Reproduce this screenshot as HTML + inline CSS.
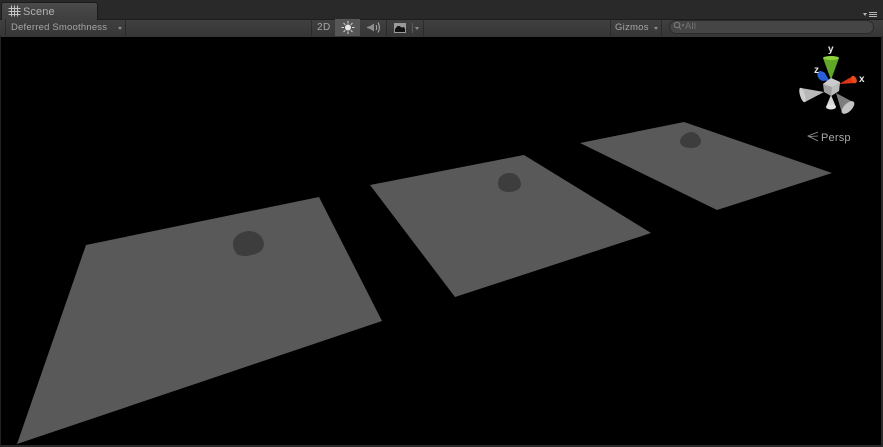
<!DOCTYPE html>
<html><head><meta charset="utf-8">
<style>
html,body{margin:0;padding:0;background:#000;}
#r{position:relative;width:883px;height:447px;overflow:hidden;background:#000;font-family:"Liberation Sans",sans-serif;}
.a{position:absolute}
#top{left:0;top:0;width:883px;height:19px;background:#292929;}
#tab{left:1px;top:2px;width:97px;height:18px;background:linear-gradient(#4a4a4a,#3e3e3e);border:1px solid #1c1c1c;border-bottom:none;border-radius:3px 3px 0 0;box-sizing:border-box;}
#bar{left:0;top:19px;width:883px;height:18px;background:linear-gradient(#404040,#363636);border-top:1px solid #1d1d1d;box-sizing:border-box;}
.t{color:#a6a6a6;font-size:9.5px;letter-spacing:.2px;line-height:12px;white-space:nowrap}
.s{width:1px;top:19px;height:17px;background:#2a2a2a}
.tri{width:0;height:0;border-left:2.5px solid transparent;border-right:2.5px solid transparent;border-top:3px solid #8c8c8c}
</style></head><body>
<div id="r">
<div class="a" id="top"></div>
<div class="a" id="bar"></div>
<div class="a" id="tab"></div>
<svg class="a" style="left:8px;top:5px" width="13" height="13" viewBox="0 0 13 13"><path d="M3.500 0.500V11.500M6.500 0.500V11.500M9.500 0.500V11.500M0.500 3.500H12.500M0.500 6.500H12.500M0.500 9.500H12.500" stroke="#c4c4c4" stroke-width="1" fill="none"/></svg>
<div class="a t" style="left:23px;top:6px;font-size:11px;letter-spacing:.1px;color:#b0b0b0;line-height:13px">Scene</div>
<div class="a s" style="left:5px"></div>
<div class="a t" style="left:11px;top:22px">Deferred Smoothness</div>
<div class="a tri" style="left:118px;top:27px"></div>
<div class="a s" style="left:125px"></div>
<div class="a s" style="left:311px"></div>
<div class="a t" style="left:317px;top:22px;font-size:10px;letter-spacing:.5px">2D</div>
<div class="a s" style="left:335px"></div>
<div class="a" style="left:335px;top:19px;width:25px;height:17px;background:#565656"></div>
<svg class="a" style="left:341px;top:20px" width="14" height="15" viewBox="0 0 14 15"><circle cx="7" cy="7.500" r="3" fill="#e8e8e8"/><path d="M7 1V3.500M7 11.500V14M.5 7.500H3M11 7.500H13.500M2.500 3L4.300 4.800M9.700 10.200L11.500 12M2.500 12L4.300 10.200M9.700 4.800L11.500 3" stroke="#d5d5d5" stroke-width="1"/></svg>
<div class="a s" style="left:386px"></div>
<svg class="a" style="left:366px;top:20px" width="16" height="15" viewBox="0 0 16 15"><path d="M1 7L4 6L8 3.500V11.500L4 9L1 8Z" fill="#8c8c8c"/><path d="M10 5Q11.500 7.500 10 10M12 2.500Q14.800 7.500 12 12.500" stroke="#b0b0b0" fill="none"/></svg>
<svg class="a" style="left:394px;top:23px" width="12" height="10" viewBox="0 0 12 10"><rect x="0" y="0" width="12" height="10" fill="#9a9a9a"/><path d="M1 9V6L3.500 3L5.500 3L7.500 4.500L10 4L11 6V9Z" fill="#111"/></svg>
<div class="a" style="left:412px;top:23px;width:1px;height:10px;background:#5a5a5a"></div>
<div class="a tri" style="left:415px;top:27px"></div>
<div class="a s" style="left:423px"></div>
<div class="a s" style="left:610px"></div>
<div class="a t" style="left:615px;top:22px;letter-spacing:.25px">Gizmos</div>
<div class="a tri" style="left:654px;top:27px"></div>
<div class="a s" style="left:661px"></div>
<div class="a" style="left:669px;top:20px;width:203px;height:12px;border-radius:7px;background:#454545;border:1px solid #2a2a2a;"></div>
<svg class="a" style="left:673px;top:21px" width="12" height="11" viewBox="0 0 12 11"><circle cx="4" cy="4" r="2.800" stroke="#7e7e7e" fill="none"/><path d="M6 6L8 8.500" stroke="#7e7e7e"/><path d="M8.500 3.500H11.500L10 5.500Z" fill="#7e7e7e"/></svg>
<div class="a t" style="left:685px;top:21px;color:#747474">All</div>
<div class="a tri" style="left:863px;top:13px;border-top-color:#b5b5b5"></div>
<div class="a" style="left:869px;top:12px;width:8px;height:5px;border-top:1px solid #b5b5b5;border-bottom:1px solid #b5b5b5;box-sizing:border-box"><div style="height:1px;margin-top:1px;background:#b5b5b5"></div></div>

<svg class="a" style="left:0;top:36px" width="883" height="411" viewBox="0 36 883 411">
<g fill="#595959">
<polygon points="86,245 319,197 382,321 17,444"/>
<polygon points="370,185 524,155 651,233 455,297"/>
<polygon points="580,143 684,122 832,173 717,210"/>
</g>
<g fill="#3d3d3d">
<path d="M233 243C234 236 241 231 250 231C259 232 264 238 264 245C263 251 258 254 251 255C246 257 240 256 237 254C234 251 233 247 233 243Z"/>
<path d="M498 183C498 177 503 173 510 173C517 173 521 179 521 185C520 190 514 192 509 192C502 192 498 189 498 183Z"/>
<path d="M680 141C681 136 686 132 692 132C698 133 701 138 701 142C700 146 696 148 691 148C685 148 680 146 680 141Z"/>
</g>
<!-- gizmo -->
<polygon points="823,58 839,58 831,80" fill="#62a828"/>
<ellipse cx="831" cy="58" rx="8" ry="2" fill="#8ed23d"/>
<ellipse cx="822" cy="76" rx="4" ry="5.500" transform="rotate(-40 822 76)" fill="#2a5fd8"/>
<polygon points="818,77 824,72 831,83" fill="#2a5fd8"/>
<polygon points="853,76 856,83 839,84" fill="#df3512"/>
<ellipse cx="854" cy="79.500" rx="2.500" ry="4" transform="rotate(-25 854 79.500)" fill="#e84a20"/>
<polygon points="801,88 824,92 805,102" fill="#b8b8b8"/>
<ellipse cx="802.500" cy="95" rx="2.500" ry="7.500" transform="rotate(-17 802.500 95)" fill="#cfcfcf"/>
<polygon points="836,93 853,102 842,113" fill="#7d7d7d"/>
<ellipse cx="848" cy="107.500" rx="4" ry="8" transform="rotate(45 848 107.500)" fill="#c4c4c4"/>
<polygon points="831,95 826,107 836,107" fill="#d8d8d8"/>
<ellipse cx="831" cy="107" rx="5" ry="2.500" fill="#e4e4e4"/>
<polygon points="823,84 831,78 840,82 839,91 831,96 824,92" fill="#a0a0a0"/>
<polygon points="823,84 831,78 840,82 832,87" fill="#cccccc"/>
<polygon points="832,87 840,82 839,91 831,96" fill="#bdbdbd"/>
<text x="828" y="52" font-family="Liberation Sans" font-weight="bold" font-size="10" fill="#e8e8e8">y</text>
<text x="814" y="73" font-family="Liberation Sans" font-weight="bold" font-size="10" fill="#e8e8e8">z</text>
<text x="859" y="82" font-family="Liberation Sans" font-weight="bold" font-size="10" fill="#e8e8e8">x</text>
<path d="M818 132L808 136L818 141M818 136L809 136.500" stroke="#9a9a9a" stroke-width=".8" fill="none"/>
<text x="821" y="141" font-family="Liberation Sans" font-size="11" letter-spacing=".2" fill="#a8a8a8">Persp</text>
</svg>
<div class="a" style="left:0;top:445px;width:883px;height:2px;background:#2a2a2a"></div>
<div class="a" style="left:0;top:36px;width:1px;height:411px;background:#222"></div>
<div class="a" style="left:881px;top:36px;width:2px;height:411px;background:#2a2a2a"></div>
</div>
</body></html>
